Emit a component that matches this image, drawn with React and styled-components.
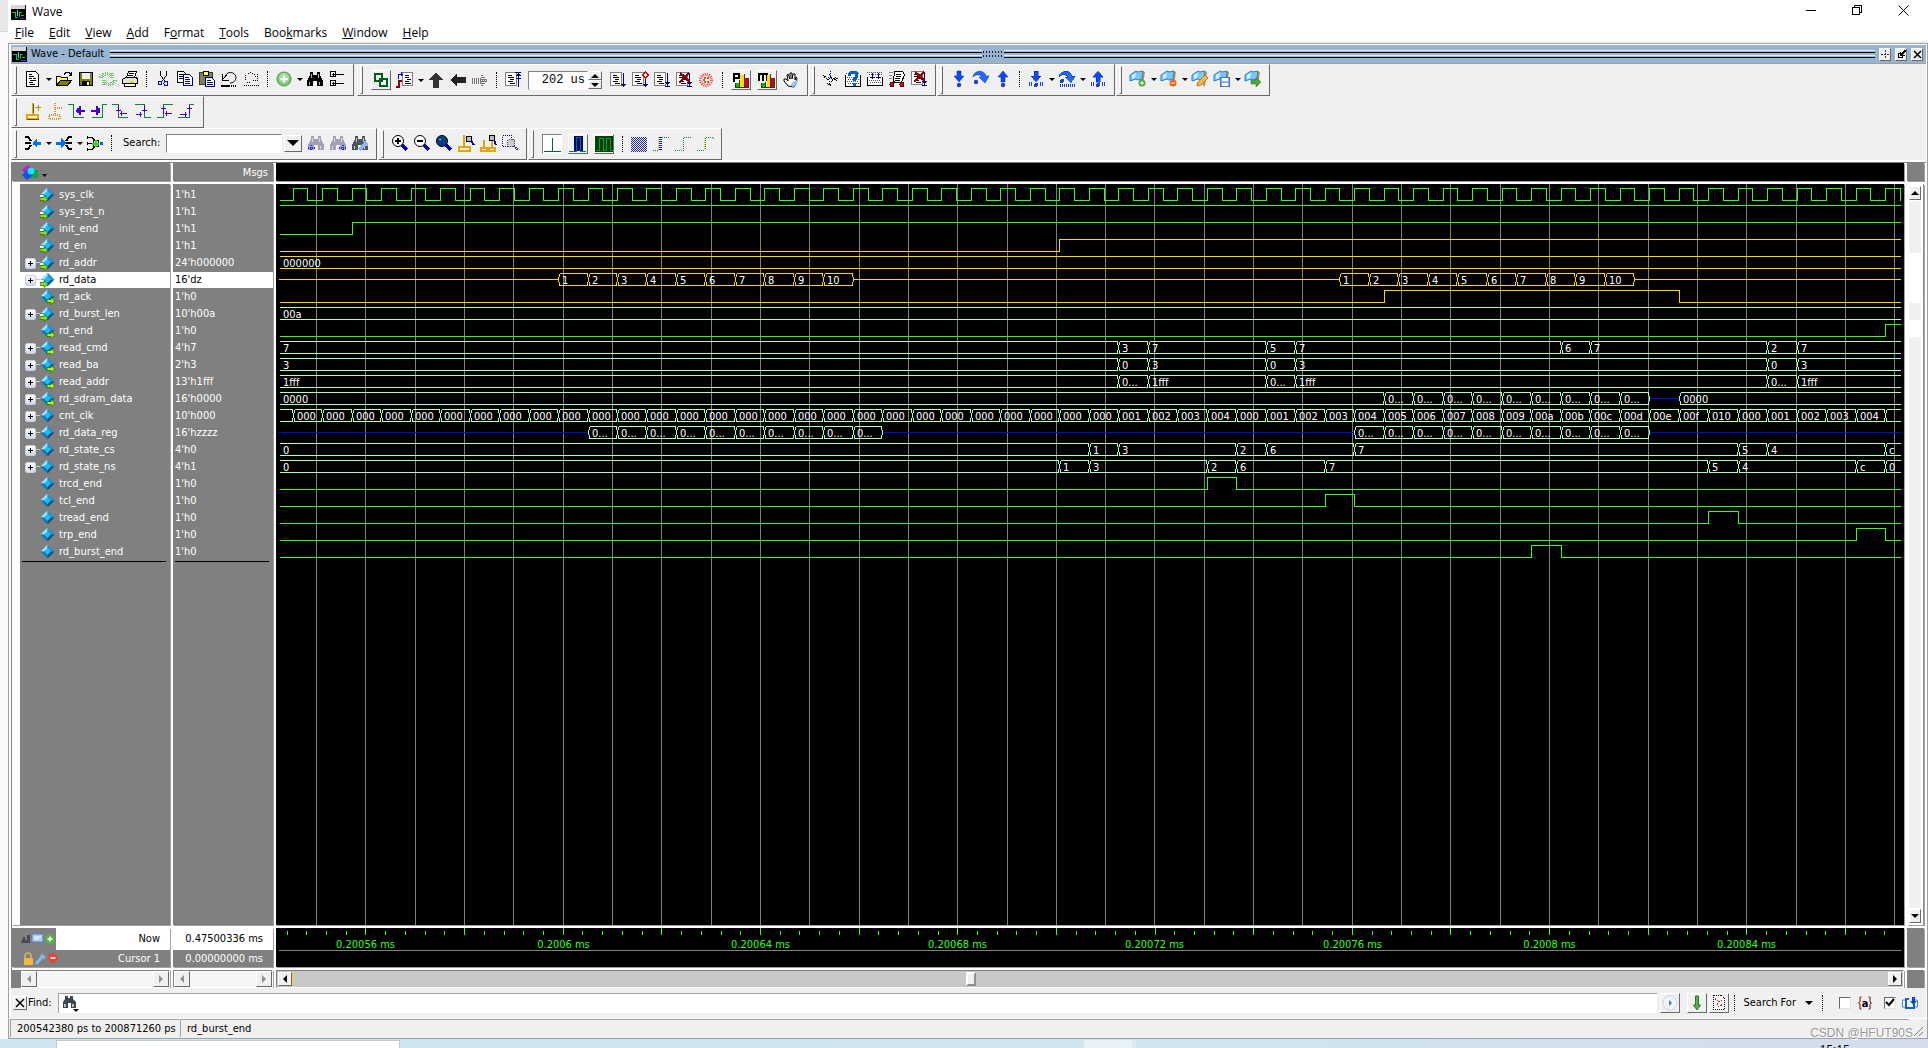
import React, { useState } from "react";
import styled, { createGlobalStyle, css } from "styled-components";

const GlobalStyle = createGlobalStyle`
  * {
    box-sizing: border-box;
  }
  html, body, #root {
    height: 100%;
    margin: 0;
  }
  body {
    background: #f0f0f0;
    color: #000;
    font-family: "DejaVu Sans Condensed", "DejaVu Sans", sans-serif;
    font-size: 11px;
    line-height: 16px;
    overflow: hidden;
  }
  button, input, select {
    font: inherit;
    color: inherit;
    margin: 0;
    padding: 0;
    border: 0;
    background: none;
  }
  svg {
    display: block;
    flex: none;
  }
  ul {
    list-style: none;
    margin: 0;
    padding: 0;
  }
`;

const raised = css`
  background: #f0f0f0;
  border: 1px solid;
  border-color: #fff #696969 #696969 #fff;
`;

/* ---------- icons ---------- */

const page = (
  <g>
    <path d="M1.500 1.500h11v13h-11z" fill="#fff" stroke="#808080" />
    <path d="M4 4.500h4M4 6.500h6M6 8.500h4M4 10.500h5M6 12.500h5" stroke="#000" />
  </g>
);
const downStem = <path d="M14.500 2v14M12 11.500h5M13 12.500h3M12 15.500h5" stroke="#000080" />;
const flagBase = (
  <g shapeRendering="auto">
    <path d="M13 1l3 1-2 14-2 0z" fill="#c98b4a" />
    <path d="M1 5l6-4 2 1 5-1-1 8-4 1-2-1-6 2z" fill="#7cc8f4" stroke="#2d7fc0" />
    <path d="M3 5l4-2-1 5-3 1z" fill="#d5f1ff" />
  </g>
);
const lens = (fill) => (
  <g>
    <path d="M11 11l5 5" stroke="#0000c0" strokeWidth="3" />
    <circle cx="7" cy="7" r="5.500" fill={fill} stroke="#000" shapeRendering="auto" />
  </g>
);
const blueArrow = {
  down: <path d="M7 1h4v5h3l-5 6-5-6h3z" fill="#0a4bff" stroke="#0020a0" strokeWidth=".5" />,
  up: <path d="M7 12h4v-5h3l-5-6-5 6h3z" fill="#0a4bff" stroke="#0020a0" strokeWidth=".5" />,
  over: (
    <path d="M1 7c1-7 11-8 13-1h3l-4 7-6-6h3c-2-3-6-3-9 0z" fill="#1f6bff" stroke="#0020a0" strokeWidth=".5" />
  )
};
const bits = <path d="M2.500 12v4M4.500 12v4M13.500 12v4M15.500 12v4" stroke="#2040d0" />;
const binoculars = (fill) => (
  <g fill={fill}>
    <path d="M4 2h3v3h4v-3h3v3l3 6v5h-6v-5h-4v5h-6v-5l3-6z" />
    <path d="M3 12h1v3h-1zM13 12h1v3h-1zM5 4h1v4h-1zM12 4h1v4h-1z" fill="#fff" opacity=".7" />
  </g>
);

const icons = {
  doc: (
    <g>
      <path d="M2.500 1.500h9l3 3v12h-12z" fill="#fff" stroke="#000" />
      <path d="M5 4.500h3M5 6.500h5M5 8.500h3M9 8.500h3M6 10.500h6M5 12.500h4M6 14.500h5" stroke="#000" />
    </g>
  ),
  open: (
    <g>
      <path d="M1.500 15.500v-9h4l1 1h6v3" fill="#ffff60" stroke="#000" />
      <path d="M1.500 15.500l4-5h11l-4 5z" fill="#808000" stroke="#000" />
      <path d="M9 4.500l2-2h3l2 2M16.500 2v4M14 5.500h3" stroke="#000" fill="none" />
    </g>
  ),
  save: (
    <g>
      <path d="M2.500 2.500h13v13h-13z" fill="#808000" stroke="#000" />
      <path d="M5 3h8v6h-8z" fill="#f0f0f0" />
      <path d="M5 11h8v4h-8z" fill="#000" />
      <path d="M10 12h2v3h-2z" fill="#fff" />
    </g>
  ),
  reload: (
    <g stroke="#79c479" strokeWidth="4" strokeDasharray="1 1" fill="none">
      <path d="M2 8c1-5 7-6 10-2M13 3v6M16 10c-1 5-7 6-10 2M5 15v-6" />
    </g>
  ),
  print: (
    <g stroke="#000">
      <path d="M5.500 7.500l2-6h8l-2 6z" fill="#fff" />
      <path d="M8 3.500h5M7 5.500h5" />
      <path d="M1.500 9.500l3-2h11l1 2v4h-15z" fill="#e0e0e0" />
      <path d="M3.500 13.500h11v3h-11z" fill="#fff" />
      <path d="M9 11.500h4" stroke="#e0e000" strokeWidth="2" />
    </g>
  ),
  cut: (
    <g fill="none">
      <path d="M6.500 1v4l4 6M12.500 1v4l-4 6" stroke="#000" />
      <circle cx="6" cy="13" r="2" stroke="#0000e0" />
      <circle cx="12" cy="13.500" r="2" stroke="#0000e0" />
    </g>
  ),
  copy: (
    <g>
      <path d="M1.500 1.500h6l2 2v9h-8z" fill="#fff" stroke="#000" />
      <path d="M3 4.500h4M3 6.500h4M3 8.500h4" stroke="#000" />
      <path d="M7.500 4.500h6l3 3v8h-9z" fill="#fff" stroke="#000080" />
      <path d="M9 7.500h4M9 9.500h5M9 11.500h5M9 13.500h5" stroke="#000080" />
    </g>
  ),
  paste: (
    <g>
      <path d="M1.500 2.500h13v12h-13z" fill="#808060" stroke="#404000" />
      <path d="M5 1h5v4h-5z" fill="#ffff60" stroke="#000" />
      <path d="M7.500 7.500h6l3 3v6h-9z" fill="#fff" stroke="#000080" />
      <path d="M9 10.500h4M9 12.500h6M9 14.500h6" stroke="#000080" />
    </g>
  ),
  undo: (
    <g fill="none" stroke="#000">
      <path d="M5 7c1-6 10-6 11 0 0 4-3 6-6 6" shapeRendering="auto" />
      <path d="M2.500 4v6h6M3 9l4-4" />
      <path d="M1 15.500h9" strokeWidth="2" />
      <path d="M11 15.500h6" strokeDasharray="1 1" strokeWidth="2" />
    </g>
  ),
  redo: (
    <g fill="none" stroke="#000" strokeDasharray="1 1">
      <path d="M3 8c0-6 9-7 11-1M15.500 4v6h-6M8 13c-3 0-5-2-5-5M2 15.500h15" />
    </g>
  ),
  add: (
    <g shapeRendering="auto">
      <circle cx="9" cy="9" r="7" fill="#7cc576" stroke="#4c9a48" />
      <circle cx="9" cy="8" r="5" fill="#a8dca0" />
      <path d="M9 5.500v7M5.500 9h7" stroke="#fff" strokeWidth="2" />
    </g>
  ),
  find: binoculars("#000"),
  tree: (
    <g stroke="#000" fill="#fff">
      <path d="M2.500 1.500h5v5h-5zM2.500 10.500h5v5h-5z" />
      <path d="M4 4.500h3M4 13.500h3M8 4.500h8M8 13.500h8M5.500 3v3M5.500 12v3" />
    </g>
  ),
  link: (
    <g fill="none" stroke="#006020" strokeWidth="2">
      <path d="M3 3h7v7h-7zM8 8h7v7h-7z" />
    </g>
  ),
  waveDoc: (
    <g>
      <path d="M6.500 1.500h10v13h-10z" fill="#fff" stroke="#808080" />
      <path d="M9 4.500h4M9 6.500h4M11 8.500h4M9 10.500h4M9 12.500h6" stroke="#000" />
      <path d="M2.500 8v-5h4M5 1v4" stroke="#0000ff" fill="none" />
      <path d="M0 16h3v-6h3" stroke="#900000" strokeWidth="2" fill="none" />
    </g>
  ),
  up: <path d="M9 1l7 8h-4v8h-6v-8h-4z" fill="#333" />,
  left: <path d="M1 9l7-6v3h9v6h-9v3z" fill="#222" />,
  right: (
    <path
      d="M1 7.500h9M1 9.500h15M1 11.500h9M10.500 4v11M12.500 6v7M14.500 8v3"
      stroke="#777"
      strokeDasharray="1 1"
      strokeWidth="2"
    />
  ),
  docUp: (
    <g>
      {page}
      <path d="M14.500 2v14M11 1.500h6M12 4.500h5M13 3.500h3M12 7.500h5" stroke="#000080" />
    </g>
  ),
  docDown: (
    <g>
      {page}
      <path d="M14.500 2v14M12 13.500h5M13 14.500h3" stroke="#000080" />
    </g>
  ),
  docStep: (
    <g>
      {page}
      <path d="M14.500 2v14M12 13.500h5M13 14.500h3" stroke="#000080" />
      <path d="M14.500 1l3 3-3 3-3-3z" fill="#fff" stroke="#e00000" />
    </g>
  ),
  docEnd: (
    <g>
      {page}
      {downStem}
    </g>
  ),
  docStop: (
    <g>
      {page}
      {downStem}
      <path d="M5 2l10 9M14 2l-10 10" stroke="#900000" strokeWidth="2.500" />
    </g>
  ),
  restart: (
    <g fill="none" stroke="#e85040" shapeRendering="auto">
      <circle cx="9" cy="9" r="5.500" strokeWidth="3" strokeDasharray="1 1" />
      <path d="M12 7h-5v4h5" strokeWidth="2" strokeDasharray="2 1" />
    </g>
  ),
  perf: (
    <g>
      <path d="M2 3h5v4h-5zM2 3v8" fill="none" stroke="#000" strokeWidth="2" />
      <path d="M4 12h3v4h-3z" fill="#00c000" />
      <path d="M8 4h4v12h-4z" fill="#ffe000" />
      <path d="M13 7h3v9h-3z" fill="#e00000" />
      <path d="M3.500 12v4.500h13v-10M7.500 9v7M12.500 3v13" fill="none" stroke="#333" />
    </g>
  ),
  mem: (
    <g>
      <path d="M1 10v-7h8v7M5 3v7" fill="none" stroke="#000" strokeWidth="2" />
      <path d="M4 12h3v4h-3z" fill="#00c000" />
      <path d="M9 4h3v12h-3z" fill="#ffe000" />
      <path d="M13 7h3v9h-3z" fill="#e00000" />
      <path d="M3.500 12v4.500h13v-10M7.500 11v5M12.500 3v13" fill="none" stroke="#333" />
    </g>
  ),
  hand: (
    <g shapeRendering="auto">
      <path d="M6 15l-4-5v-2h2l2 2-1-6 1-1 2 5v-6h2v6l1-5h2v6l1-3 1 1-1 6-2 3z" fill="#fff" stroke="#000" />
      <path d="M9 15c-1-3 3-4 5-6l2 2-4 5z" fill="#9cc4ee" />
    </g>
  ),
  noise: (
    <g stroke="#000" strokeDasharray="1 1" fill="none">
      <path d="M1 5l5 5M2 8l3-3M6 9l3 7M11 8l5 4M9 12l6-6M5 13l5 4M7 4l4 6M13 10l3-2" />
      <path d="M8 1v8M6 7l2 2 3-2" stroke="#0000c0" />
    </g>
  ),
  watch: (
    <g>
      <path d="M1.500 5v11h15v-11" fill="#fff" stroke="#000" />
      <path d="M2 3.500h14M3 7.500h12M4 9.500h12M3 11.500h12M4 13.500h12" stroke="#555" strokeDasharray="1 1" />
      <path d="M5 6c0-5 8-5 8-1 0 3-3 3-3 6" fill="none" stroke="#0060d0" strokeWidth="3" />
      <path d="M8.500 12.500h3v3h-3z" fill="#0060d0" />
    </g>
  ),
  expandTime: (
    <g>
      <path d="M1.500 7v8.500h15v-8.500" fill="#fff" stroke="#000" />
      <path d="M1 2.500h16M3 4.500h14M3 10.500h12M4 12.500h12" stroke="#555" strokeDasharray="1 1" />
      <path d="M6.500 3v6M12.500 3v6M4 7.500h5M10 7.500h5" stroke="#000080" />
    </g>
  ),
  cart: (
    <g>
      <path d="M6.500 1.500h8l2 3-3 8h-7l-1-2z" fill="#fff" stroke="#000" />
      <path d="M8 4.500h5M8 6.500h5M7 8.500h5M7 10.500h5" stroke="#000" />
      <path d="M1 2.500h4M1 5.500h3M1 8.500h3" stroke="#888" />
      <circle cx="4" cy="14.500" r="2" fill="#e00020" stroke="#500" />
      <circle cx="14" cy="14.500" r="2" fill="#e00020" stroke="#500" />
    </g>
  ),
  intoDown: (
    <g shapeRendering="auto">
      {blueArrow.down}
      <circle cx="9" cy="15" r="2.200" fill="#2040d0" />
    </g>
  ),
  over: (
    <g shapeRendering="auto">
      {blueArrow.over}
      <circle cx="4" cy="12" r="2.200" fill="#2040d0" />
    </g>
  ),
  outUp: (
    <g shapeRendering="auto">
      {blueArrow.up}
      <circle cx="9" cy="15" r="2.200" fill="#2040d0" />
    </g>
  ),
  intoBits: (
    <g>
      {blueArrow.down}
      {bits}
      <circle cx="9" cy="15" r="2" fill="#2040d0" />
    </g>
  ),
  overBits: (
    <g>
      {blueArrow.over}
      <circle cx="4" cy="11" r="2" fill="#2040d0" />
      <path
        d="M2.500 14v3M4.500 14v3M6.500 14v3M8.500 14v3M10.500 14v3M12.500 14v3M14.500 14v3M16.500 14v3"
        stroke="#2040d0"
      />
    </g>
  ),
  outBits: (
    <g>
      {blueArrow.up}
      {bits}
      <circle cx="9" cy="15" r="2" fill="#2040d0" />
    </g>
  ),
  flagAdd: (
    <g shapeRendering="auto">
      {flagBase}
      <circle cx="13" cy="13" r="3.500" fill="#4ea83c" />
      <path d="M13 11v4M11 13h4" stroke="#fff" />
    </g>
  ),
  flagRemove: (
    <g shapeRendering="auto">
      {flagBase}
      <circle cx="13" cy="13" r="3.500" fill="#e86818" />
      <path d="M11 13h4" stroke="#fff" />
    </g>
  ),
  flagEdit: (
    <g shapeRendering="auto">
      {flagBase}
      <path d="M6 16l1-4 7-7 3 3-7 7z" fill="#f6b846" stroke="#b87820" />
    </g>
  ),
  flagSave: (
    <g>
      {flagBase}
      <path d="M7.500 7.500h9v9h-9z" fill="#86b2ea" stroke="#4a74b8" />
      <path d="M9 8h6v3h-6zM9 13h6v3h-6z" fill="#fff" />
    </g>
  ),
  flagGo: (
    <g shapeRendering="auto">
      {flagBase}
      <path d="M7 10h5v-3l5 5-5 5v-3h-5z" fill="#4ea83c" stroke="#2c7020" strokeWidth=".5" />
    </g>
  ),
  cursorAdd: (
    <g>
      <path d="M2.500 12.500h11v4h-11zM8.500 1v11" fill="#f0f0f0" stroke="#e0a800" strokeWidth="2" />
      <path d="M11 5.500h6M14 3v6" stroke="#c09000" strokeWidth="1" />
      <path d="M3 17.500h12M9.500 2v9" stroke="#705000" />
    </g>
  ),
  cursorDel: (
    <g stroke="#c8a040" strokeDasharray="1 1" fill="none">
      <path d="M2.500 12.500h11v4h-11zM8.500 1v11M9 5.500h8" strokeWidth="2" />
    </g>
  ),
  prevLow: (
    <g fill="none">
      <path d="M0 2.500h5v13h11" stroke="#108040" />
      <path d="M8 8.500h9M9.500 6v5M11.500 4v9" stroke="#4000d0" strokeWidth="2" />
    </g>
  ),
  nextHigh: (
    <g fill="none">
      <path d="M17 2.500h-5v13h-10" stroke="#108040" />
      <path d="M1 8.500h9M8.500 6v5M6.500 4v9" stroke="#4000d0" strokeWidth="2" />
    </g>
  ),
  fallPrev: (
    <g fill="none">
      <path d="M0 2.500h6v13h10" stroke="#108040" />
      <path d="M6.500 3v7M4 8.500h5M8 11.500h7M9.500 9v5" stroke="#4000d0" />
    </g>
  ),
  fallNext: (
    <g fill="none">
      <path d="M1 2.500h9v13h7" stroke="#108040" />
      <path d="M10.500 3v7M8 8.500h5M2 12.500h6M6.500 10v5" stroke="#4000d0" />
    </g>
  ),
  risePrev: (
    <g fill="none">
      <path d="M1 15.500h6v-13h10" stroke="#108040" />
      <path d="M7.500 4v8M5 6.500h5M9 11.500h7M10.500 9v5" stroke="#4000d0" />
    </g>
  ),
  riseNext: (
    <g fill="none">
      <path d="M0 15.500h11v-13h5" stroke="#108040" />
      <path d="M11.500 4v8M9 6.500h5M2 12.500h7M7.500 10v5" stroke="#4000d0" />
    </g>
  ),
  join: (
    <g fill="none">
      <path d="M1 3h3l3 4M1 9h6M1 15h3l3-4" stroke="#000" strokeWidth="2" />
      <path d="M9 9h8" stroke="#0070ff" strokeWidth="3" />
      <path d="M8 9l5-5v10z" fill="#0070ff" />
    </g>
  ),
  split: (
    <g fill="none">
      <path d="M17 3h-3l-3 4M11 9h6M17 15h-3l-3-4" stroke="#000" strokeWidth="2" />
      <path d="M1 9h8" stroke="#0070ff" strokeWidth="3" />
      <path d="M11 9l-5-5v10z" fill="#0070ff" />
    </g>
  ),
  net: (
    <g fill="none" stroke="#000">
      <path d="M1 3.500h5l3 3M1 9.500h12M1 15.500h5l3-3M1.500 2v3M1.500 8v3M1.500 14v3M7 6.500h5v6h-5z" />
      <path d="M6 9.500h7M9.500 6v7" stroke="#20e000" strokeWidth="2" />
      <path d="M14 8h3v3h-3z" fill="#0060ff" stroke="none" />
    </g>
  ),
  findPrev: (
    <g>
      <g opacity=".5">{binoculars("#557")}</g>
      <path d="M1 14h8M4 11v6" stroke="#22f" strokeWidth="2" strokeDasharray="1 1" />
    </g>
  ),
  findNext: (
    <g>
      <g opacity=".5">{binoculars("#557")}</g>
      <path d="M10 14h7M14 11v6" stroke="#22f" strokeWidth="2" strokeDasharray="1 1" />
    </g>
  ),
  findOpts: (
    <g>
      {binoculars("#4a5560")}
      <path d="M8 16l6-6M13 8l4 3" stroke="#8cb8ec" strokeWidth="3" />
    </g>
  ),
  zoomIn: (
    <g>
      {lens("#fff")}
      <path d="M4 7h6M7 4v6" stroke="#000" strokeWidth="2" />
    </g>
  ),
  zoomOut: (
    <g>
      {lens("#fff")}
      <path d="M4 7h6" stroke="#000" strokeWidth="2" />
    </g>
  ),
  zoomFull: (
    <g>
      {lens("#004080")}
      <path d="M4 5h2" stroke="#9cf" />
    </g>
  ),
  zoomCursor: (
    <g>
      <path d="M1.500 12.500h11v4h-11zM6.500 1v11" fill="#f0f0f0" stroke="#e0a800" strokeWidth="2" />
      <circle cx="12" cy="5" r="3" fill="#bbb" stroke="#000" />
      <path d="M14 7l3 4" stroke="#0000c0" strokeWidth="2" />
    </g>
  ),
  zoomTwo: (
    <g>
      <path
        d="M1.500 13.500h6v3h-6zM9.500 13.500h6v3h-6zM4.500 6v7M12.500 6v7"
        fill="#f0f0f0"
        stroke="#e0a800"
        strokeWidth="2"
      />
      <circle cx="13" cy="4" r="3" fill="#bbb" stroke="#000" />
      <path d="M15 6l2 5" stroke="#0000c0" strokeWidth="2" />
    </g>
  ),
  zoomArea: (
    <g>
      <path d="M1.500 1.500h9v11h-9z" fill="none" stroke="#0000a0" strokeDasharray="1 1" />
      <circle cx="10" cy="9" r="4" fill="#ccc" stroke="#555" strokeDasharray="1 1" />
      <path d="M13 12l4 4" stroke="#33a" strokeDasharray="1 1" strokeWidth="2" />
    </g>
  ),
  pulse: <path d="M1 16.500h17M9.500 3v13" stroke="#006838" />,
  pulseBox: (
    <g>
      <path d="M5 1h9v15h-9z" fill="#000080" />
      <path d="M0 16.500h7v-14h4v14h6" fill="none" stroke="#008040" />
    </g>
  ),
  pulseFull: (
    <g>
      <path d="M0 1h18v16h-18z" fill="#004000" />
      <path d="M1 15.500h3v-12h4v12h3v-12h4v12h3" fill="none" stroke="#00a040" />
    </g>
  ),
  dither: (
    <g stroke="#202088" strokeDasharray="1 1">
      <path d="M1 2.500h16M1 4.500h16M1 6.500h16M1 8.500h16M1 10.500h16M1 12.500h16M1 14.500h16M1 16.500h16" />
      <path d="M2 3.500h15M2 5.500h15M2 7.500h15M2 9.500h15M2 11.500h15M2 13.500h15M2 15.500h15" />
    </g>
  ),
  edgeBox: (
    <g fill="none" strokeDasharray="1 1">
      <path d="M8 2v14" stroke="#202088" strokeWidth="4" />
      <path d="M1 15.500h6M10 2.500h7" stroke="#008040" />
      <path d="M6.500 2v14" stroke="#d0c000" />
    </g>
  ),
  edge: <path d="M1 15.500h8v-13h8" fill="none" stroke="#208040" strokeDasharray="1 1" />,
  edgeGold: (
    <g fill="none" strokeDasharray="1 1">
      <path d="M1 15.500h8M9.500 2.500h8v2" stroke="#208040" />
      <path d="M8.500 3v12" stroke="#d8d000" />
      <path d="M9.500 3v12" stroke="#208040" />
    </g>
  )
};

const Icon = ({ name }) => (
  <svg width="18" height="18" viewBox="0 0 18 18" shapeRendering="crispEdges" aria-hidden="true">
    {icons[name]}
  </svg>
);

const AppMark = () => (
  <svg width="15" height="15" viewBox="0 0 15 15" shapeRendering="crispEdges" aria-hidden="true">
    <path d="M0 0h15v15h-15z" fill="#000" />
    <path d="M0 0h14v4h-14z" fill="#d8d8d8" />
    <path d="M1 7h3v5h3M8 12v-5h3M10 10h3" fill="none" stroke="#20c050" />
    <path d="M6.500 5v6" stroke="#40e0e0" />
    <path d="M9 13.500h5" stroke="#4020d0" />
  </svg>
);

const Diamond = ({ port }) => (
  <svg width="16" height="16" viewBox="0 0 16 16" aria-hidden="true">
    <path d="M7.500 0.500l-7 7h7z" fill="#9ee4fb" />
    <path d="M7.500 0.500l7 7h-7z" fill="#1c92d8" />
    <path d="M0.500 7.500l7 7v-7z" fill="#1474b0" />
    <path d="M14.500 7.500l-7 7v-7z" fill="#0d4f80" />
    <path d="M7.500 4l3.500 3.500-3.500 3.500-3.500-3.500z" fill="#10c0ff" />
    {port === "in" && (
      <g>
        <path d="M0 8h4v2h-4z" fill="#e8f8ff" />
        <path d="M0 10.500h4v-2l4 3.500-4 3.500v-2h-4z" fill="#8fe010" stroke="#1c6a10" strokeWidth=".7" />
      </g>
    )}
    {port === "out" && (
      <path d="M7 10.500h4v-2l4 3.500-4 3.500v-2h-4z" fill="#a8f020" stroke="#1c6a10" strokeWidth=".7" />
    )}
  </svg>
);

/* ---------- window chrome ---------- */

const Desktop = styled.div`
  display: flex;
  flex-direction: column;
  height: 100vh;
  background: #f9f9f9;
`;

const Behind = styled.div`
  display: flex;
  flex: 1;
  min-height: 0;
  padding-left: 8px;
  background: linear-gradient(#e8e8e8 0 31px, #d8d8d8 31px 32px, #f9f9f9 32px);
`;

const Frame = styled.div`
  display: flex;
  flex-direction: column;
  flex: 1;
  min-width: 0;
  background: #f0f0f0;
`;

const TitleBar = styled.header`
  display: flex;
  align-items: center;
  height: 24px;
  padding: 0 2px 0 3px;
  background: #fff;
  font: 12px/18px "Open Sans", "Noto Sans", sans-serif;
`;

const TitleText = styled.h1`
  flex: 1;
  margin: 0 0 0 6px;
  font: inherit;
`;

const WindowButton = styled.button`
  display: flex;
  align-items: center;
  justify-content: center;
  width: 46px;
  height: 20px;
  margin-bottom: 4px;
`;

const MenuBar = styled.nav`
  display: flex;
  height: 17px;
  padding-left: 7px;
  gap: 15px;
  background: #fff;
  font: 12px/17px "Open Sans", "Noto Sans", sans-serif;
`;

const MenuItem = styled.button`
  height: 17px;
`;

const Inner = styled.div`
  display: flex;
  flex-direction: column;
  flex: 1;
  min-height: 0;
  margin-top: 2px;
  border: 1px solid #a0a0a0;
  border-bottom: 0;
  padding: 1px 1px 0 2px;
  background: #fff;
`;

const DockTitle = styled.div`
  display: flex;
  align-items: center;
  height: 19px;
  padding: 0 3px 0 1px;
  gap: 4px;
  background: #99b4d1;
  border-bottom: 1px solid #a0a0a0;
`;

const DockLines = styled.div`
  display: flex;
  justify-content: center;
  flex: 1;
  height: 8px;
  margin-left: 2px;
  background: linear-gradient(
    #dff6ff 0 1px,
    #99b4d1 1px 2px,
    #000 2px 3px,
    #99b4d1 3px 5px,
    #dff6ff 5px 6px,
    #99b4d1 6px 7px,
    #000 7px 8px
  );
`;

const DockGrip = styled.span`
  width: 22px;
  height: 8px;
  background: radial-gradient(#223 0 1px, #99b4d1 1px) 0 0 / 3px 4px;
`;

const DockButton = styled.button`
  ${raised}
  display: flex;
  align-items: center;
  justify-content: center;
  width: 12px;
  height: 13px;
`;

/* ---------- toolbars ---------- */

const ToolGroup = styled.div`
  display: flex;
  align-items: center;
  height: 32px;
  padding: 0 5px ${(p) => (p.$low ? 0 : 2)}px 2px;
  border: 1px solid;
  border-color: #fff #696969 #696969 #fff;
`;

const ToolRow = styled.div`
  display: flex;
  height: 32px;
  gap: 1px;
  background: #f0f0f0;
  ${ToolGroup}:first-child {
    margin-right: ${(p) => p.$apart || 0}px;
  }
`;

const Handle = styled.span`
  align-self: flex-start;
  width: 3px;
  height: 28px;
  margin: 1px 5px 0 0;
  border: 1px solid;
  border-color: #fff #696969 #696969 #fff;
`;

const ToolButton = styled.button`
  display: flex;
  align-items: center;
  justify-content: center;
  width: 22px;
  height: 22px;
`;

const BoxButton = styled.button`
  ${raised}
  display: flex;
  align-items: center;
  justify-content: center;
  width: 20px;
  height: 20px;
  margin: 0 3px;
  overflow: hidden;
  ${(p) =>
    p.$sunken &&
    css`
      background: #fff;
      border-color: #808080 #fff #fff #808080;
    `}
`;

const Caret = styled.button`
  display: flex;
  align-items: center;
  justify-content: center;
  width: 9px;
  height: 20px;
  &::after {
    content: "";
    border: 3px solid transparent;
    border-top-color: #000;
    border-bottom: 0;
  }
`;

const Dots = styled.span`
  width: 1px;
  height: 16px;
  margin: 0 5px;
  border-left: 1px dotted #000;
`;

const TimeInput = styled.input`
  width: 60px;
  height: 19px;
  margin-left: 4px;
  padding-right: 2px;
  background: #fff;
  border: 1px solid;
  border-color: #808080 #fff #fff #808080;
  font: 12px/16px "Liberation Mono", monospace;
  text-align: right;
`;

const Spinner = styled.div`
  display: flex;
  flex-direction: column;
  width: 14px;
  margin-right: 5px;
`;

const SpinButton = styled.button`
  ${raised}
  display: flex;
  align-items: center;
  justify-content: center;
  height: 9px;
`;

const SearchLabel = styled.label`
  margin-left: 6px;
  padding-right: 6px;
`;

const SearchInput = styled.input`
  width: 116px;
  height: 19px;
  background: #fff;
  border: 1px solid;
  border-color: #808080 #fff #fff #808080;
`;

const DropButton = styled(BoxButton)`
  width: 18px;
  height: 17px;
  margin: 0 3px 0 2px;
`;

/* ---------- wave panes ---------- */

const Panes = styled.main`
  display: grid;
  flex: 1;
  min-height: 0;
  grid-template-columns: 158px 100px minmax(0, 1fr) 17px;
  grid-template-rows: 18px minmax(0, 1fr) 39px 18px;
  gap: 3px;
  margin-top: 2px;
  padding: 0 2px 0 0;
  border: 1px solid #808080;
  border-width: 1px 0 0 1px;
`;

const Cell = styled.div`
  min-width: 0;
  min-height: 0;
  overflow: hidden;
  background: ${(p) => p.$bg || "#808080"};
  box-shadow: 1px 1px 0 #a0a0a0;
  color: #fff;
`;

const HeadCell = styled(Cell)`
  display: flex;
  align-items: center;
  justify-content: ${(p) => (p.$end ? "flex-end" : "flex-start")};
  padding: 2px 5px 0 8px;
`;

const SignalList = styled.ul`
  padding-top: 3px;
  margin-left: ${(p) => p.$inset || 0}px;
  height: 100%;
  background: #808080;
`;

const SignalRow = styled.li`
  display: flex;
  align-items: center;
  height: 17px;
  padding: 0 0 1px ${(p) => p.$pad}px;
  border-bottom: 1px solid #808080;
  background: ${(p) => (p.$selected ? "#fff" : "#808080")};
  color: ${(p) => (p.$selected ? "#000" : "#fff")};
  white-space: nowrap;
`;

const Expander = styled.button`
  display: flex;
  align-items: center;
  justify-content: center;
  width: 11px;
  height: 11px;
  margin-top: 2px;
  border: 1px solid #c8d0e0;
  border-radius: 2px;
  background: linear-gradient(#fff, #d0d8e8);
  visibility: ${(p) => (p.$hidden ? "hidden" : "visible")};
`;

const Stem = styled.span`
  width: 4px;
  height: 1px;
  background: ${(p) => (p.$hidden ? "transparent" : "#c8c8c8")};
`;

const SignalName = styled.span`
  margin-left: 3px;
`;

const EndLine = styled.li`
  height: 1px;
  margin: 0 4px 0 2px;
  background: #000;
`;

const NamesCell = styled(Cell)`
  background: #fff;
`;

const CanvasCell = styled(Cell)`
  padding-right: 3px;
  background: #000;
`;

const NowRow = styled.div`
  display: flex;
  align-items: center;
  height: 22px;
  padding-right: 10px;
  background: #fff;
  color: #000;
`;

const CursorRow = styled(NowRow)`
  height: 17px;
  background: #808080;
  color: #fff;
`;

const RowTools = styled.div`
  display: flex;
  align-items: center;
  height: 100%;
  width: ${(p) => p.$width}px;
  padding-left: ${(p) => p.$pad}px;
  background: #808080;
`;

const RowText = styled.span`
  flex: 1;
  text-align: right;
  white-space: nowrap;
`;

const ScrollX = styled.div`
  display: flex;
  height: 18px;
  margin-left: ${(p) => p.$inset || 0}px;
  padding: ${(p) => (p.$wide ? "1px" : "0")};
  background: ${(p) => (p.$wide ? "#c8c8c8" : "#f6f6f6")};
  border: 1px solid;
  border-color: #808080 #fff #fff #808080;
`;

const ScrollButton = styled.button`
  ${raised}
  display: flex;
  align-items: center;
  justify-content: center;
  flex: none;
  width: ${(p) => p.$size || 16}px;
  min-height: 14px;
  color: ${(p) => (p.$off ? "#909090" : "#000")};
`;

const TrackX = styled.div`
  flex: 1;
  display: flex;
  margin-left: 1px;
  border-left: ${(p) => (p.$marked ? "1px solid #ffd700" : 0)};
`;

const Space = styled.span`
  flex: ${(p) => p.$grow} 1 0;
`;

const ThumbX = styled.span`
  width: 10px;
  background: #f0f0f0;
  border: 2px solid;
  border-color: #fff #909090 #909090 #fff;
`;

const ScrollY = styled.div`
  display: flex;
  flex-direction: column;
  height: 100%;
  padding: 2px;
  gap: 1px;
  background: #fff;
  border-right: 1px solid #909090;
`;

const TrackY = styled.div`
  flex: 1;
  background: linear-gradient(
    #f0f0f0 0 52px,
    #fff 52px 102px,
    #f0f0f0 102px 119px,
    #fff 119px 136px,
    #f0f0f0 136px
  );
`;

/* ---------- find + status bars ---------- */

const FindBar = styled.div`
  display: flex;
  align-items: center;
  height: 30px;
  padding: 0 8px 1px 2px;
  background: #f0f0f0;
`;

const CloseFind = styled(BoxButton)`
  width: 14px;
  height: 14px;
  margin: 0 1px 0 0;
`;

const FindField = styled.div`
  display: flex;
  align-items: center;
  flex: 1;
  height: 20px;
  margin: 0 2px 0 6px;
  padding-left: 3px;
  background: #fff;
  border-top: 1px solid #a0a0a0;
  border-left: 1px solid #a0a0a0;
`;

const FindInput = styled.input`
  flex: 1;
  height: 18px;
  outline: 0;
`;

const FindButton = styled(BoxButton)`
  margin: 0 0 0 ${(p) => p.$gap}px;
`;

const SearchFor = styled.button`
  display: flex;
  align-items: center;
  gap: 9px;
  margin: 0 4px 0 3px;
`;

const Check = styled.label`
  display: flex;
  align-items: center;
  gap: 6px;
  margin-left: 11px;
`;

const CheckBox = styled.input`
  appearance: none;
  width: 12px;
  height: 12px;
  background: #fff;
  border: 1px solid;
  border-color: #696969 #e3e3e3 #e3e3e3 #696969;
  &:checked {
    background: #fff
      url("data:image/svg+xml,%3Csvg xmlns='http://www.w3.org/2000/svg' viewBox='0 0 10 10'%3E%3Cpath d='M1 4l3 3 5-6' fill='none' stroke='%23000' stroke-width='2'/%3E%3C/svg%3E");
  }
`;

const StatusBar = styled.footer`
  display: flex;
  height: 21px;
  padding: 0 3px 0 1px;
  gap: 1px;
  background: #f0f0f0;
  border: 1px solid #a0a0a0;
  border-top: 1px solid #fff;
`;

const StatusCell = styled.div`
  flex: ${(p) => (p.$grow ? 1 : "none")};
  width: ${(p) => (p.$grow ? "auto" : "169px")};
  height: 18px;
  padding: 1px 6px;
  border-top: 1px solid #a0a0a0;
  border-left: 1px solid #a0a0a0;
  white-space: nowrap;
`;

const Watermark = styled.span`
  position: absolute;
  right: 15px;
  bottom: 7px;
  color: #999;
  font: 12px/16px "Liberation Sans", Arial, sans-serif;
  text-shadow: 1px 1px 0 #fff;
`;

const Taskbar = styled.div`
  display: flex;
  justify-content: space-between;
  height: 9px;
  padding: 1px 78px 0 56px;
  overflow: hidden;
  background: linear-gradient(90deg, #cfe6ee, #d0e5ee 65%, #d4dcec);
`;

const TaskSearch = styled.span`
  width: 344px;
  height: 8px;
  background: #fff;
  border: 1px solid #c8c8c8;
  border-bottom: 0;
`;

const TaskButton = styled.span`
  width: 52px;
  height: 8px;
  background: #e8f2f6;
  border-right: 4px solid #dceaf0;
`;

const TaskClock = styled.span`
  padding-top: 3px;
  font: 12px/14px "Open Sans", sans-serif;
`;

/* ---------- signal data ---------- */

const GREEN = "#33ff1a";
const GOLD = "#ffd700";
const PALE = "#b4ffb4";
const BLUE = "#0000ff";

const PERIOD = 29.49;
const FIRST_EDGE = 17.1;
const FAR = 4000;
const ROW = 17;

const run = (from, values) => values.map((v, i) => [from + i, v]);
const same = (from, to, v) => run(from, Array(to - from).fill(v));
const hex = (n) => n.toString(16).padStart(3, "0");
const upTo = (n, first = 0) => Array.from({ length: n - first + 1 }, (_, i) => hex(first + i));
const ten = ["1", "2", "3", "4", "5", "6", "7", "8", "9", "10"];

// start === null is the left border of the canvas, value "z" is high impedance
const signals = [
  { name: "sys_clk", msg: "1'h1", port: "in", kind: "clock", color: GREEN },
  { name: "sys_rst_n", msg: "1'h1", port: "in", kind: "bit", level: 1, edges: [], color: GREEN },
  { name: "init_end", msg: "1'h1", port: "in", kind: "bit", level: 0, edges: [2], color: GREEN },
  { name: "rd_en", msg: "1'h1", port: "in", kind: "bit", level: 0, edges: [26], color: GOLD },
  { name: "rd_addr", msg: "24'h000000", port: "in", kind: "bus", color: GOLD, values: [[null, "000000"]] },
  {
    name: "rd_data",
    msg: "16'dz",
    port: "in",
    kind: "bus",
    color: GOLD,
    zColor: GOLD,
    values: [[null, "z"], ...run(9, ten), [19, "z"], ...run(35.5, ten), [45.5, "z"]]
  },
  { name: "rd_ack", msg: "1'h0", port: "out", kind: "bit", level: 0, edges: [37, 47], color: GOLD },
  { name: "rd_burst_len", msg: "10'h00a", port: "in", kind: "bus", color: PALE, values: [[null, "00a"]] },
  { name: "rd_end", msg: "1'h0", port: "out", kind: "bit", level: 0, edges: [54], color: GREEN },
  {
    name: "read_cmd",
    msg: "4'h7",
    port: "out",
    kind: "bus",
    color: PALE,
    values: [[null, "7"], [28, "3"], [29, "7"], [33, "5"], [34, "7"], [43, "6"], [44, "7"], [50, "2"], [51, "7"]]
  },
  {
    name: "read_ba",
    msg: "2'h3",
    port: "out",
    kind: "bus",
    color: PALE,
    values: [[null, "3"], [28, "0"], [29, "3"], [33, "0"], [34, "3"], [50, "0"], [51, "3"]]
  },
  {
    name: "read_addr",
    msg: "13'h1fff",
    port: "out",
    kind: "bus",
    color: PALE,
    values: [[null, "1fff"], [28, "0..."], [29, "1fff"], [33, "0..."], [34, "1fff"], [50, "0..."], [51, "1fff"]]
  },
  {
    name: "rd_sdram_data",
    msg: "16'h0000",
    port: "out",
    kind: "bus",
    color: PALE,
    values: [[null, "0000"], ...same(37, 46, "0..."), [46, "z"], [47, "0000"]]
  },
  {
    name: "cnt_clk",
    msg: "10'h000",
    kind: "bus",
    color: PALE,
    values: [
      [null, ""],
      ...same(0, 28, "000"),
      ...run(28, upTo(4, 1)),
      ...run(32, upTo(16)),
      ...run(49, upTo(4)),
      [54, ""]
    ]
  },
  {
    name: "rd_data_reg",
    msg: "16'hzzzz",
    kind: "bus",
    color: PALE,
    values: [[null, "z"], ...same(10, 20, "0..."), [20, "z"], ...same(36, 46, "0..."), [46, "z"]]
  },
  {
    name: "rd_state_cs",
    msg: "4'h0",
    kind: "bus",
    color: PALE,
    values: [[null, "0"], [27, "1"], [28, "3"], [32, "2"], [33, "6"], [36, "7"], [49, "5"], [50, "4"], [54, "c"]]
  },
  {
    name: "rd_state_ns",
    msg: "4'h1",
    kind: "bus",
    color: PALE,
    values: [
      [null, "0"],
      [26, "1"],
      [27, "3"],
      [31, "2"],
      [32, "6"],
      [35, "7"],
      [48, "5"],
      [49, "4"],
      [53, "c"],
      [54, "0"]
    ]
  },
  { name: "trcd_end", msg: "1'h0", kind: "bit", level: 0, edges: [31, 32], color: GREEN },
  { name: "tcl_end", msg: "1'h0", kind: "bit", level: 0, edges: [35, 36], color: GREEN },
  { name: "tread_end", msg: "1'h0", kind: "bit", level: 0, edges: [48, 49], color: GREEN },
  { name: "trp_end", msg: "1'h0", kind: "bit", level: 0, edges: [53, 54], color: GREEN },
  { name: "rd_burst_end", msg: "1'h0", kind: "bit", level: 0, edges: [42, 43], color: GREEN }
];

const edgeX = (k) => Math.floor(FIRST_EDGE + PERIOD * k) + 0.5;
const gridX = (n) => Math.floor(40.55 + 49.32 * n) + 0.5;

const bitPath = (top, level, edges) => {
  let high = level;
  let d = `M4 ${top + (high ? 0 : 12)}`;
  edges.forEach((x) => {
    high = !high;
    d += `H${x}V${top + (high ? 0 : 12)}`;
  });
  return `${d}H${FAR}`;
};

const BitTrace = ({ top, signal }) => (
  <path d={bitPath(top, signal.level, signal.edges.map(edgeX))} stroke={signal.color} fill="none" />
);

const ClockTrace = ({ top, signal }) => {
  const edges = [];
  for (let k = 0; k < 55; k++) {
    edges.push(edgeX(k), edgeX(k + 0.5));
  }
  return <path d={bitPath(top, 0, edges)} stroke={signal.color} fill="none" />;
};

const BusTrace = ({ top, signal }) =>
  signal.values.map(([start, value], i) => {
    const next = signal.values[i + 1];
    const x1 = start === null ? 3 : edgeX(start);
    const x2 = next ? edgeX(next[0]) : FAR;
    if (value === "z") {
      return <path key={i} d={`M${x1} ${top + 6}H${x2}`} stroke={signal.zColor || BLUE} />;
    }
    const left = start === null ? "" : `M${x1 + 1} ${top}v3l-1 1v4l1 1v3`;
    const right = next ? `M${x2 - 1} ${top}v3l1 1v4l-1 1v3` : "";
    return (
      <g key={i}>
        <path
          d={`M${x1 + 1} ${top}H${x2 - 1}M${x1 + 1} ${top + 12}H${x2 - 1}${left}${right}`}
          stroke={signal.color}
          fill="none"
        />
        <text x={Math.floor(x1) + 4} y={top + 10.5} fill="#fff">
          {value}
        </text>
      </g>
    );
  });

const traces = { bit: BitTrace, clock: ClockTrace, bus: BusTrace };

const WaveCanvas = () => (
  <svg width="100%" height="100%" shapeRendering="crispEdges" role="img" aria-label="Waveforms">
    {Array.from({ length: 33 }, (_, n) => (
      <path key={n} d={`M${gridX(n)} 0V${FAR}`} stroke="#808080" />
    ))}
    {signals.map((signal, i) => {
      const Trace = traces[signal.kind];
      return <Trace key={signal.name} top={4.5 + ROW * i} signal={signal} />;
    })}
  </svg>
);

const timeLabels = ["0.20056", "0.2006", "0.20064", "0.20068", "0.20072", "0.20076", "0.2008", "0.20084"];

const TimeScale = () => (
  <svg width="100%" height="100%" shapeRendering="crispEdges" role="img" aria-label="Time scale">
    {Array.from({ length: 82 }, (_, j) => {
      const x = Math.floor(11 + 19.728 * j) + 0.5;
      return <path key={j} d={`M${x} ${j % 5 === 4 ? 0 : 3}V7`} stroke={GREEN} />;
    })}
    {timeLabels.map((label, i) => (
      <text key={label} x={gridX(1 + 4 * i)} y="20" fill={GREEN} textAnchor="middle">
        {label} ms
      </text>
    ))}
    <path d={`M3 22.500H${FAR}`} stroke="#808080" />
  </svg>
);

/* ---------- composed parts ---------- */

const Triangle = ({ dir, size = 8 }) => {
  const d = {
    up: "M0 6l4-4 4 4z",
    down: "M0 2l4 4 4-4z",
    left: "M6 0l-4 4 4 4z",
    right: "M2 0l4 4-4 4z"
  }[dir];
  return (
    <svg width={size} height={size} viewBox="0 0 8 8" aria-hidden="true">
      <path d={d} fill="currentColor" />
    </svg>
  );
};

// "|" is a separator, "v" a drop-down arrow, everything else an icon name
const Tools = ({ items }) =>
  items.split(" ").map((item, i) => {
    if (item === "|") return <Dots key={i} />;
    if (item === "v") return <Caret key={i} aria-label="More" />;
    return (
      <ToolButton key={i} aria-label={item}>
        <Icon name={item} />
      </ToolButton>
    );
  });

const menus = [
  ["", "F", "ile"],
  ["", "E", "dit"],
  ["", "V", "iew"],
  ["", "A", "dd"],
  ["F", "o", "rmat"],
  ["", "T", "ools"],
  ["Boo", "k", "marks"],
  ["", "W", "indow"],
  ["", "H", "elp"]
];

const Toolbars = () => {
  const [time, setTime] = useState("202 us");
  return (
    <>
      <ToolRow $apart={2}>
        <ToolGroup>
          <Handle />
          <Tools items="doc v open save reload print | cut copy paste undo redo | add v find tree" />
        </ToolGroup>
        <ToolGroup $low>
          <Handle />
          <BoxButton aria-label="link">
            <Icon name="link" />
          </BoxButton>
          <Tools items="waveDoc v up left right | docUp" />
          <TimeInput aria-label="Run length" value={time} onChange={(e) => setTime(e.target.value)} />
          <Spinner>
            <SpinButton aria-label="Increase">
              <Triangle dir="up" />
            </SpinButton>
            <SpinButton aria-label="Decrease">
              <Triangle dir="down" />
            </SpinButton>
          </Spinner>
          <Tools items="docDown docStep docEnd docStop restart |" />
          <BoxButton aria-label="performance">
            <Icon name="perf" />
          </BoxButton>
          <BoxButton aria-label="memory">
            <Icon name="mem" />
          </BoxButton>
          <Tools items="hand" />
        </ToolGroup>
        <ToolGroup>
          <Handle />
          <Tools items="noise watch expandTime cart docStop" />
        </ToolGroup>
        <ToolGroup>
          <Handle />
          <Tools items="intoDown over outUp | intoBits v overBits v outBits" />
        </ToolGroup>
        <ToolGroup>
          <Handle />
          <Tools items="flagAdd v flagRemove v flagEdit flagSave v flagGo" />
        </ToolGroup>
      </ToolRow>
      <ToolRow>
        <ToolGroup>
          <Handle />
          <Tools items="cursorAdd cursorDel prevLow nextHigh fallPrev fallNext risePrev riseNext" />
        </ToolGroup>
      </ToolRow>
      <ToolRow>
        <ToolGroup>
          <Handle />
          <Tools items="join v split v net |" />
          <SearchLabel htmlFor="search">Search:</SearchLabel>
          <SearchInput id="search" />
          <DropButton aria-label="Search history">
            <Triangle dir="down" size={12} />
          </DropButton>
          <Tools items="findPrev findNext findOpts" />
        </ToolGroup>
        <ToolGroup>
          <Handle />
          <Tools items="zoomIn zoomOut zoomFull zoomCursor zoomTwo zoomArea" />
        </ToolGroup>
        <ToolGroup $low>
          <Handle />
          <BoxButton $sunken aria-label="pulse">
            <Icon name="pulse" />
          </BoxButton>
          <BoxButton aria-label="pulse box">
            <Icon name="pulseBox" />
          </BoxButton>
          <BoxButton aria-label="pulse full">
            <Icon name="pulseFull" />
          </BoxButton>
          <Tools items="| dither edgeBox edge edgeGold" />
        </ToolGroup>
      </ToolRow>
    </>
  );
};

const SignalNames = () => (
  <SignalList $inset={8}>
    {signals.map((signal) => {
      const plain = signal.kind !== "bus";
      return (
        <SignalRow key={signal.name} $pad={5} $selected={signal.name === "rd_data"}>
          <Expander $hidden={plain} aria-label="Expand">
            <svg width="5" height="5" viewBox="0 0 5 5" shapeRendering="crispEdges">
              <path d="M0 2.500h5M2.500 0v5" stroke="#000" />
            </svg>
          </Expander>
          <Stem $hidden={plain} />
          <Diamond port={signal.port} />
          <SignalName>{signal.name}</SignalName>
        </SignalRow>
      );
    })}
    <EndLine />
  </SignalList>
);

const SignalValues = () => (
  <SignalList>
    {signals.map((signal) => (
      <SignalRow key={signal.name} $pad={2} $selected={signal.name === "rd_data"}>
        {signal.msg}
      </SignalRow>
    ))}
    <EndLine />
  </SignalList>
);

const SideScroll = ({ inset }) => (
  <ScrollX $inset={inset}>
    <ScrollButton $off aria-label="Scroll left">
      <Triangle dir="left" />
    </ScrollButton>
    <TrackX />
    <ScrollButton $off aria-label="Scroll right">
      <Triangle dir="right" />
    </ScrollButton>
  </ScrollX>
);

const WavePanes = () => (
  <Panes>
    <HeadCell>
      <svg width="28" height="18" viewBox="0 0 28 18" aria-hidden="true">
        <path d="M8 1l6 5-6 5-6-5z" fill="#b020d0" />
        <path d="M9 6h9v8h-9z" fill="#18a048" />
        <path d="M7 6l6 5-6 5-5-5z" fill="#1050e8" />
        <circle cx="11" cy="7" r="3.500" fill="#18e0f8" />
        <path d="M22 10h5l-2.500 3z" fill="#000" />
      </svg>
    </HeadCell>
    <HeadCell $end>Msgs</HeadCell>
    <Cell $bg="#000" />
    <Cell />

    <NamesCell>
      <SignalNames />
    </NamesCell>
    <Cell>
      <SignalValues />
    </Cell>
    <CanvasCell>
      <WaveCanvas />
    </CanvasCell>
    <Cell>
      <ScrollY>
        <ScrollButton $size={12} aria-label="Scroll up">
          <Triangle dir="up" />
        </ScrollButton>
        <TrackY />
        <ScrollButton $size={12} aria-label="Scroll down">
          <Triangle dir="down" />
        </ScrollButton>
      </ScrollY>
    </Cell>

    <Cell>
      <NowRow>
        <RowTools $width={44} $pad={8}>
          <svg width="36" height="14" viewBox="0 0 36 14" aria-hidden="true">
            <path d="M1 11l2-6h2v3h2v-5h3v8z" fill="#4a4a52" />
            <path d="M12 2h11v8h-11z" fill="#a8ccf4" stroke="#5880b8" />
            <path d="M14 5h7M14 7h5" stroke="#fff" />
            <circle cx="30" cy="7" r="5" fill="#58b048" />
            <path d="M30 4.500v5M27.500 7h5" stroke="#fff" strokeWidth="1.500" />
          </svg>
        </RowTools>
        <RowText>Now</RowText>
      </NowRow>
      <CursorRow>
        <RowTools $width={50} $pad={10}>
          <svg width="38" height="14" viewBox="0 0 38 14" aria-hidden="true">
            <path d="M3 7v-3a3 3 0 0 1 6 0v3" fill="none" stroke="#d8b060" strokeWidth="1.500" />
            <path d="M2 6h9v7h-9z" fill="#f4b840" />
            <path d="M14 12l7-8M19 3l4 3" stroke="#8cb4ec" strokeWidth="3" />
            <circle cx="31" cy="6" r="5" fill="#e04838" />
            <path d="M28.500 6h5" stroke="#fff" strokeWidth="1.500" />
          </svg>
        </RowTools>
        <RowText>Cursor 1</RowText>
      </CursorRow>
    </Cell>
    <Cell>
      <NowRow>
        <RowText>0.47500336 ms</RowText>
      </NowRow>
      <CursorRow>
        <RowText>0.00000000 ms</RowText>
      </CursorRow>
    </Cell>
    <CanvasCell>
      <TimeScale />
    </CanvasCell>
    <Cell />

    <Cell>
      <SideScroll inset={8} />
    </Cell>
    <Cell>
      <SideScroll />
    </Cell>
    <Cell>
      <ScrollX $wide>
        <ScrollButton $size={14} aria-label="Scroll left">
          <Triangle dir="left" />
        </ScrollButton>
        <TrackX $marked>
          <Space $grow={42} />
          <ThumbX />
          <Space $grow={57} />
        </TrackX>
        <ScrollButton $size={14} aria-label="Scroll right">
          <Triangle dir="right" />
        </ScrollButton>
      </ScrollX>
    </Cell>
    <Cell />
  </Panes>
);

const FindRow = () => {
  const [exact, setExact] = useState(false);
  const [wrap, setWrap] = useState(true);
  return (
    <FindBar>
      <CloseFind aria-label="Close find">
        <svg width="10" height="10" viewBox="0 0 10 10">
          <path d="M1 1l8 8M9 1l-8 8" stroke="#000" strokeWidth="1.500" />
        </svg>
      </CloseFind>
      <label htmlFor="find">Find:</label>
      <FindField>
        <svg width="17" height="17" viewBox="0 0 17 17" aria-hidden="true">
          <path d="M3 1h3v2h2v-2h3v3l3 3v6h-5v-5h-3v5h-5v-6l2-3z" fill="#3a4650" />
          <path d="M2 9h2v3h-2zM10 9h2v3h-2z" fill="#a8c0d0" />
          <path d="M11 14h6l-3 3z" fill="#000" />
        </svg>
        <FindInput id="find" />
      </FindField>
      <FindButton $gap={1} aria-label="Go">
        <svg width="16" height="16" viewBox="0 0 16 16">
          <circle cx="8" cy="8" r="7" fill="#eef4fa" stroke="#a0b8d8" strokeDasharray="1 1" />
          <path d="M7 5l3 3-3 3z" fill="#4878c0" />
        </svg>
      </FindButton>
      <FindButton $gap={7} aria-label="Find next">
        <svg width="10" height="16" viewBox="0 0 10 16">
          <path d="M3.500 1h3v9h2l-3.500 5-3.500-5h2z" fill="#58b048" stroke="#2c7828" />
        </svg>
      </FindButton>
      <FindButton $gap={2} aria-label="Find all">
        <svg width="16" height="17" viewBox="0 0 16 17" shapeRendering="crispEdges">
          <path d="M2.500 1.500h8l3 3v11h-11z" fill="#fff" stroke="#000" strokeDasharray="1 1" />
          <path d="M4 4l2 3 2-2M7 8l4-2M6 9l2 4 4-3" fill="none" stroke="#e02020" strokeDasharray="2 1" />
        </svg>
      </FindButton>
      <Dots />
      <SearchFor>
        Search For
        <Triangle dir="down" />
      </SearchFor>
      <Dots />
      <Check>
        <CheckBox
          type="checkbox"
          aria-label="Match exactly"
          checked={exact}
          onChange={(e) => setExact(e.target.checked)}
        />
        <svg width="16" height="16" viewBox="0 0 16 16" aria-hidden="true">
          <path
            d="M4.500 2h-1.500v5l-1.500 1 1.500 1v5h1.500M11.500 2h1.500v5l1.500 1-1.500 1v5h-1.500"
            fill="none"
            stroke="#901010"
          />
          <text x="8" y="12" textAnchor="middle" fontWeight="700">
            a
          </text>
        </svg>
      </Check>
      <Check>
        <CheckBox type="checkbox" aria-label="Wrap search" checked={wrap} onChange={(e) => setWrap(e.target.checked)} />
        <svg width="16" height="14" viewBox="0 0 16 14" aria-hidden="true">
          <path d="M4 4h-3.500v7h3.500M12 4h3.500v7h-3.500" fill="#fff" stroke="#5080d0" />
          <path d="M7 3h-3v9h8v-4" fill="none" stroke="#1060d8" strokeWidth="2" />
          <path d="M8 5h2v-4h3v4h2l-3.500 4z" fill="#0848b8" />
        </svg>
      </Check>
    </FindBar>
  );
};

const App = () => (
  <Desktop>
    <GlobalStyle />
    <Behind>
      <Frame>
        <TitleBar>
          <AppMark />
          <TitleText>Wave</TitleText>
          <WindowButton aria-label="Minimize">
            <svg width="10" height="10" viewBox="0 0 10 10" shapeRendering="crispEdges">
              <path d="M0 5.500h10" stroke="#000" />
            </svg>
          </WindowButton>
          <WindowButton aria-label="Restore">
            <svg width="10" height="10" viewBox="0 0 10 10" shapeRendering="crispEdges">
              <path d="M.5 2.500h7v7h-7zM2.500 2v-1.500h7v7h-2" fill="none" stroke="#000" />
            </svg>
          </WindowButton>
          <WindowButton aria-label="Close">
            <svg width="11" height="11" viewBox="0 0 11 11">
              <path d="M.5.5l10 10M10.500.5l-10 10" stroke="#000" />
            </svg>
          </WindowButton>
        </TitleBar>
        <MenuBar>
          {menus.map(([before, key, after]) => (
            <MenuItem key={after}>
              {before}
              <u>{key}</u>
              {after}
            </MenuItem>
          ))}
        </MenuBar>
        <Inner>
          <DockTitle>
            <AppMark />
            <span>Wave - Default</span>
            <DockLines>
              <DockGrip />
            </DockLines>
            <DockButton aria-label="Zoom pane">
              <svg width="9" height="9" viewBox="0 0 9 9" shapeRendering="crispEdges">
                <path d="M0 4.500h9M4.500 0v9" stroke="#333" strokeDasharray="2 1" />
              </svg>
            </DockButton>
            <DockButton aria-label="Undock">
              <svg width="9" height="9" viewBox="0 0 9 9" shapeRendering="crispEdges">
                <path d="M1.500 3.500h4v4h-4zM9 0l-5 5M3.500 2v3.500h4" fill="none" stroke="#000" strokeWidth="1.500" />
              </svg>
            </DockButton>
            <DockButton aria-label="Close pane">
              <svg width="9" height="9" viewBox="0 0 9 9">
                <path d="M1 1l7 7M8 1l-7 7" stroke="#000" strokeWidth="1.500" />
              </svg>
            </DockButton>
          </DockTitle>
          <Toolbars />
          <WavePanes />
          <FindRow />
        </Inner>
        <StatusBar>
          <StatusCell>200542380 ps to 200871260 ps</StatusCell>
          <StatusCell $grow>rd_burst_end</StatusCell>
          <svg width="14" height="18" viewBox="0 0 14 18" aria-hidden="true">
            <path d="M4 17l9-9M9 17l4-4" stroke="#808080" />
          </svg>
        </StatusBar>
      </Frame>
    </Behind>
    <Taskbar>
      <TaskSearch />
      <TaskButton />
      <TaskClock>15:15</TaskClock>
    </Taskbar>
    <Watermark>CSDN @HFUT90S</Watermark>
  </Desktop>
);

export default App;
